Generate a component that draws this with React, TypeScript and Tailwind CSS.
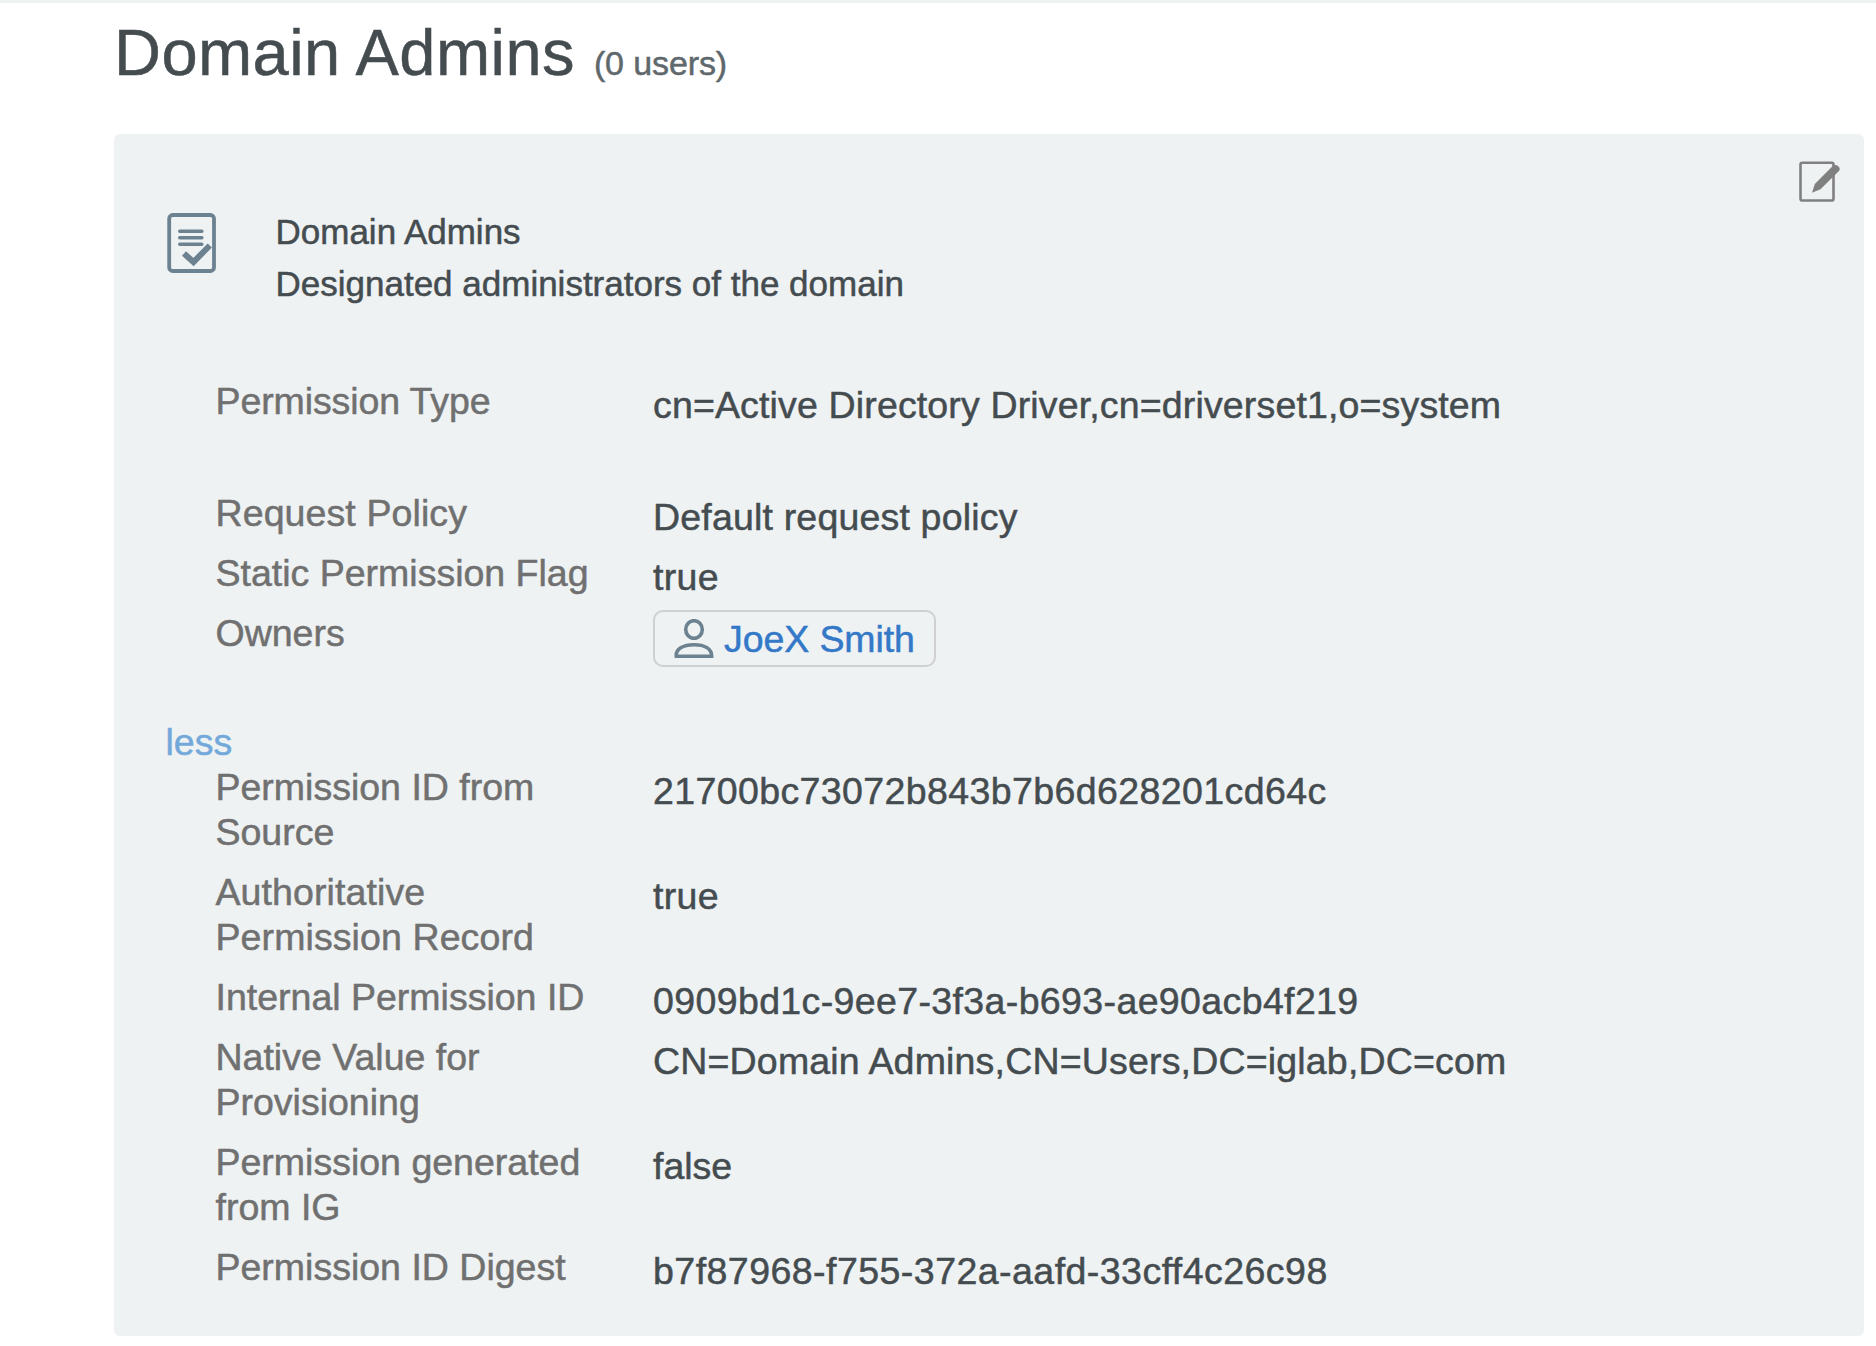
import type { ReactNode } from "react";

type RowData = { label: string[]; value: string; tracking?: string; labelTracking?: string };

const details: RowData[] = [
  { label: ["Permission ID from", "Source"], value: "21700bc73072b843b7b6d628201cd64c", tracking: "tracking-[0.39px]" },
  { label: ["Authoritative", "Permission Record"], value: "true", tracking: "tracking-[0.3px]", labelTracking: "tracking-[0.1px]" },
  { label: ["Internal Permission ID"], value: "0909bd1c-9ee7-3f3a-b693-ae90acb4f219", tracking: "tracking-[0.37px]" },
  { label: ["Native Value for", "Provisioning"], value: "CN=Domain Admins,CN=Users,DC=iglab,DC=com", tracking: "tracking-[0.18px]" },
  { label: ["Permission generated", "from IG"], value: "false" },
  { label: ["Permission ID Digest"], value: "b7f87968-f755-372a-aafd-33cff4c26c98", tracking: "tracking-[0.46px]" },
];

function Row({
  label,
  children,
  className = "",
  tracking = "",
  labelTracking = "",
}: {
  label: string[];
  children: ReactNode;
  className?: string;
  tracking?: string;
  labelTracking?: string;
}) {
  return (
    <div className={`flex pb-[15px] ${className}`}>
      <div className={`w-[437.5px] shrink-0 whitespace-nowrap text-[#707070] ${labelTracking}`}>
        {label.map((line) => (
          <div key={line}>{line}</div>
        ))}
      </div>
      <div className={`h-[45px] whitespace-nowrap pt-1 text-[#454c50] ${tracking}`}>{children}</div>
    </div>
  );
}

function DocumentIcon() {
  return (
    <svg className="h-[60px] w-[49px]" viewBox="0 0 49 60" fill="none" stroke="#6c8290">
      <rect x="2.2" y="2" width="44.8" height="56" rx="3.5" strokeWidth="3.8" />
      <path d="M12.8 18.3h22M12.8 24.8h22M12.8 31.3h22" strokeWidth="3.6" strokeLinecap="round" />
      <path d="M17 40.5l9.5 8.5L42.8 32.5" strokeWidth="6" />
    </svg>
  );
}

function EditIcon() {
  return (
    <svg className="h-[41px] w-[42px]" viewBox="0 0 42 41" fill="none">
      <rect x="1.5" y="1.7" width="33" height="37.8" rx="1.8" stroke="#808080" strokeWidth="2.6" />
      <path d="M13 31.800L15.800 23L33 5.800Q36 2.800 39 5Q42.300 7.800 39.500 10.500L21.500 28.200Z" fill="#808080" />
    </svg>
  );
}

function PersonIcon() {
  return (
    <svg className="h-[40px] w-[40px]" viewBox="0 0 40 40" fill="none" stroke="#6c8290" strokeWidth="3.6">
      <ellipse cx="20" cy="10.5" rx="8.3" ry="8.8" />
      <path d="M2.300 37.300C1.500 30 9 25.700 20 25.700S37.700 30 37.700 37.300Z" />
    </svg>
  );
}

export default function App() {
  return (
    <div className="h-[1346px] w-[1876px] overflow-hidden border-t-[3px] border-[#eef2f3] bg-white font-['Liberation_Sans',Arial,sans-serif] [-webkit-text-stroke:0.5px]">
      <header className="flex h-[131px] items-baseline pl-[114px] whitespace-nowrap">
        <h1 className="text-[65px] leading-[100px] tracking-[0.44px] text-[#454c50]">Domain Admins</h1>
        <span className="ml-[19px] text-[34px] tracking-[-0.12px] text-[#5f686c]">(0 users)</span>
      </header>
      <main className="ml-[114px] h-[1202px] w-[1750px] rounded-md bg-[#eef2f3]">
        <section className="flex h-[245px] items-start pr-[23px] pl-[53px]">
          <div className="pt-[79px]">
            <DocumentIcon />
          </div>
          <div className="ml-[59.5px] flex-1 pt-[72px] text-[35px] leading-[52px] text-[#454c50]">
            <p>Domain Admins</p>
            <p>Designated administrators of the domain</p>
          </div>
          <button className="mt-[27px]" aria-label="Edit">
            <EditIcon />
          </button>
        </section>
        <section className="h-[341px] pl-[101.5px] text-[37.5px] leading-[45px]">
          <Row label={["Permission Type"]} className="h-[112px]" tracking="tracking-[0.15px]" labelTracking="tracking-[-0.1px]">
            cn=Active Directory Driver,cn=driverset1,o=system
          </Row>
          <Row label={["Request Policy"]} tracking="tracking-[0.18px]" labelTracking="tracking-[0.1px]">
            Default request policy
          </Row>
          <Row label={["Static Permission Flag"]} tracking="tracking-[0.3px]">true</Row>
          <Row label={["Owners"]} className="h-[60px]">
            <div className="-mt-[5px] flex h-[57px] w-[283px] items-center rounded-[10px] border-2 border-[#d0d0d0] pl-[19px] text-[#3478c8]">
              <PersonIcon />
              <span className="ml-[10px] pt-px tracking-[-0.1px]">JoeX Smith</span>
            </div>
          </Row>
        </section>
        <section className="text-[37.5px] leading-[45px]">
          <a className="ml-[51.5px] block text-[#73a9da]">less</a>
          <div className="pl-[101.5px]">
            {details.map((row) => (
              <Row key={row.label[0]} label={row.label} tracking={row.tracking} labelTracking={row.labelTracking}>
                {row.value}
              </Row>
            ))}
          </div>
        </section>
      </main>
    </div>
  );
}
